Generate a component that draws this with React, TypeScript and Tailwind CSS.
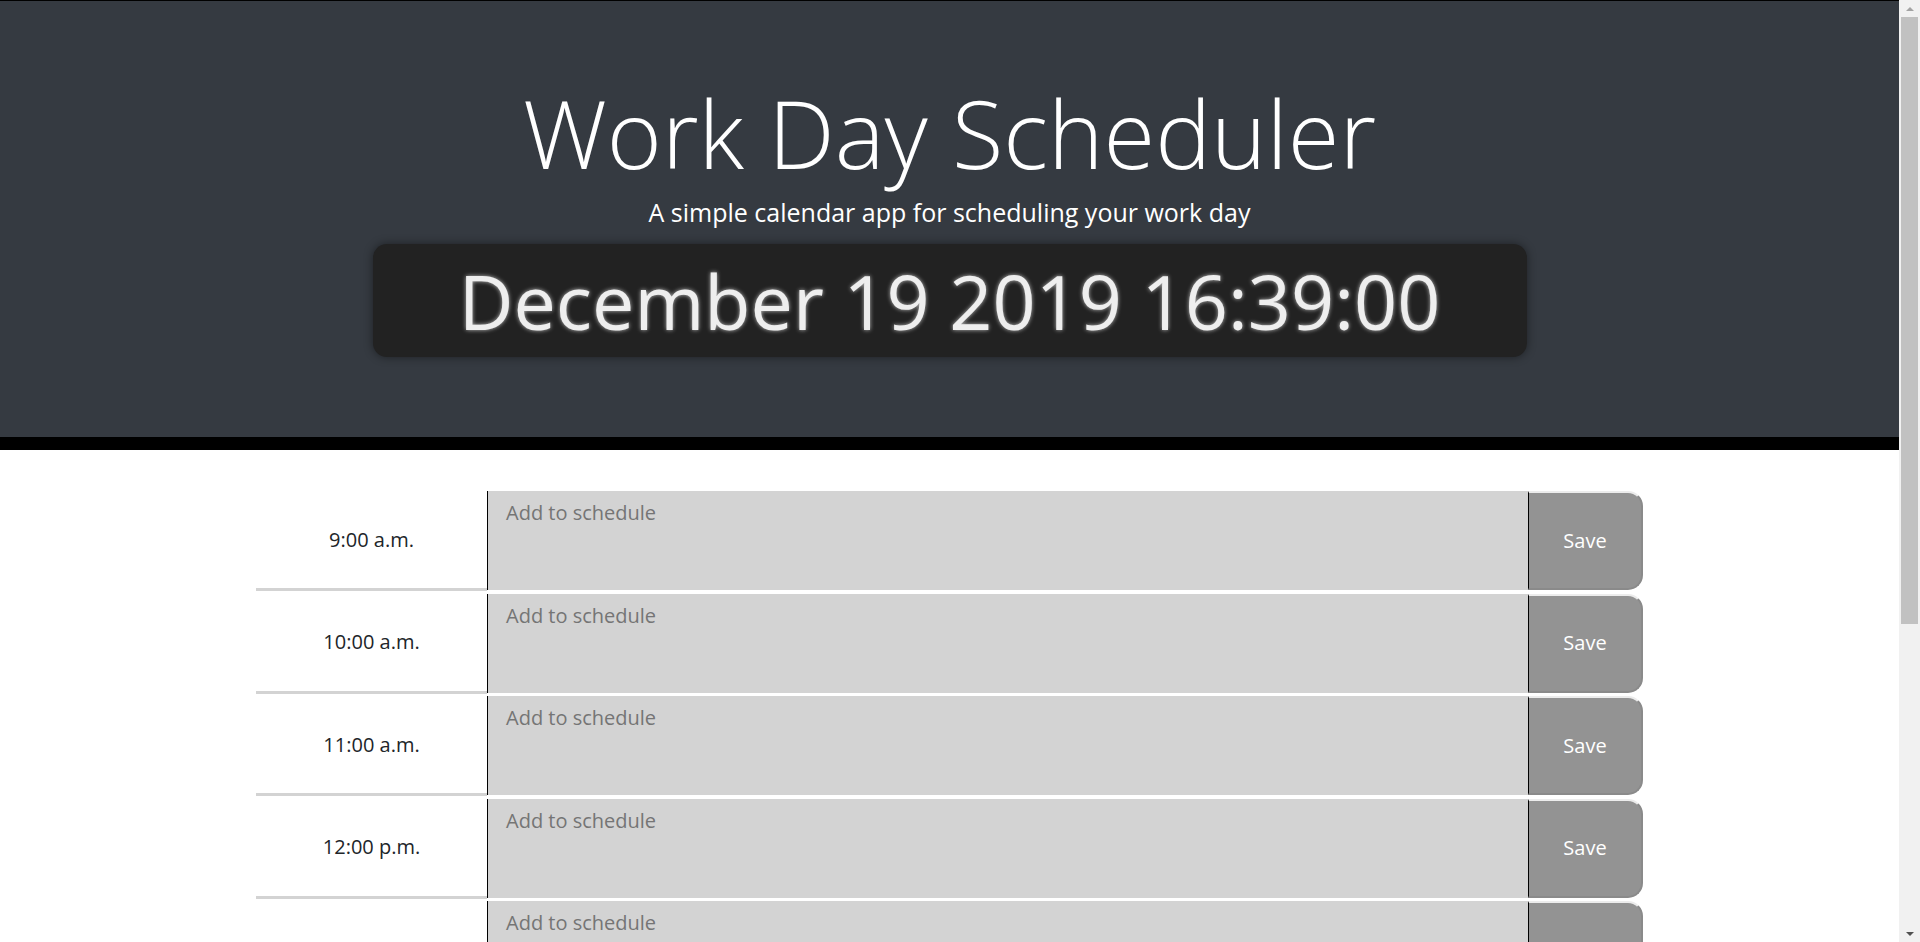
import React from 'react';

const hours = [
    '9:00 a.m.',
    '10:00 a.m.',
    '11:00 a.m.',
    '12:00 p.m.',
    '1:00 p.m.',
    '2:00 p.m.',
    '3:00 p.m.',
    '4:00 p.m.',
    '5:00 p.m.',
];

const TimeBlock: React.FC<{ label: string }> = ({ label }) => (
    <div className="grid grid-cols-[231px_1041px_115px] h-[100px] mb-[2.5px]">
        <div className="flex items-center justify-center border-b-[3px] border-[#d3d3d3] text-[20px] text-[#212529]">
            {label}
        </div>
        <textarea
            placeholder="Add to schedule"
            className="h-[99px] resize-none bg-[#d3d3d3] border-l border-black pl-[18px] pt-[7px] text-[20px] text-[#212529] placeholder:text-[#757575] outline-none"
        />
        <button className="h-[99px] bg-[#939393] border-l border-l-black border-t-2 border-t-[#ececec] border-r-2 border-r-[#8a8a8a] border-b-2 border-b-[#8a8a8a] rounded-r-[15px] text-[20px] text-white">
            Save
        </button>
    </div>
);

// stand-in for the browser's classic scrollbar seen in the screenshot
const ScrollRail: React.FC = () => (
    <aside className="flex w-[21px] shrink-0 flex-col bg-[#f1f1f1]">
        <div className="flex h-[17px] items-center justify-center">
            <span className="h-0 w-0 border-x-[4px] border-b-[4px] border-x-transparent border-b-[#a3a3a3]" />
        </div>
        <div className="mx-[2px] h-[607px] bg-[#c1c1c1]" />
        <div className="flex-1" />
        <div className="flex h-[17px] items-center justify-center">
            <span className="h-0 w-0 border-x-[4px] border-t-[4px] border-x-transparent border-t-[#505050]" />
        </div>
    </aside>
);

export default function App() {
    return (
        <div className="flex h-screen bg-white font-['Open_Sans',sans-serif]">
            <div className="flex-1 overflow-y-auto [scrollbar-width:none]">
                <header className="border-t border-black bg-[#353a41] border-b-[13px] border-b-black pt-[76px] pb-[80px] text-center text-white">
                    <h1 className="text-[94px] font-light leading-[113px]">Work Day Scheduler</h1>
                    <p className="mt-[4px] text-[25px] leading-[36px]">A simple calendar app for scheduling your work day</p>
                    <div className="mx-auto mt-[14px] w-[1154px] rounded-[14px] bg-[#222222] py-[11px] shadow-[0_0_10px_rgba(0,0,0,0.45)]">
                        <span className="block text-[75.5px] leading-[91px] text-[#eeeeee] [text-shadow:0_0_4px_#bbbbbb]">
                            December 19 2019 16:39:00
                        </span>
                    </div>
                </header>
                <main className="mx-auto w-[1387px] pt-[41px]">
                    {hours.map((h) => (
                        <TimeBlock key={h} label={h} />
                    ))}
                </main>
            </div>
            <ScrollRail />
        </div>
    );
}
